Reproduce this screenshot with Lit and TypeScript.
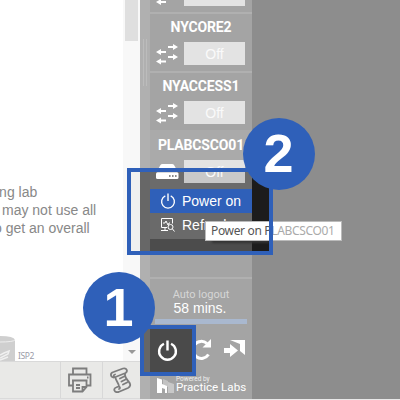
import { LitElement, html, css, svg } from "lit";
import { customElement, property } from "lit/decorators.js";

const arrows = html`<svg class="ico" width="22" height="25" viewBox="0 0 22 25">${svg`
  <g stroke="#fff" stroke-width="2" fill="#fff">
    <path d="M12 6h6M4 11h6M12 16h6M4 20.5h6" fill="none"/>
    <path stroke="none" d="M17 3l5 3-5 3zM17 13l5 3-5 3zM5 8L0 11l5 3zM5 17.5L0 20.5l5 3z"/>
  </g>`}</svg>`;

const server = html`<svg class="ico box" width="23" height="16" viewBox="0 0 23 16">
  <path d="M4.5 1q.5-1 2-1h9.500q1.500 0 2 1l3.500 6H1z" fill="#fff"/><rect x="0" y="8.300" width="22.500" height="6.700" rx="1.500" fill="#fff"/>
  <path d="M13 12h1.600M16 12h1.600M19 12h1.600" stroke="#666" stroke-width="1.5"/></svg>`;

const power = (size: number, w: number) => html`<svg width="${size}" height="${size}" viewBox="0 0 20 20">
  <path d="M6.6 3.600A8 8 0 1 0 13.400 3.600M10 .5v9.500" fill="none" stroke="#fff" stroke-width="${w}"/></svg>`;

@customElement("device-card")
export class DeviceCard extends LitElement {
  @property() name = "";
  @property() kind = "switch";
  static styles = css`
    :host { display: block; box-sizing: border-box; height: 59px; border-top: 2px solid #b0b0b0; }
    .title { height: 28px; line-height: 26px; text-align: center; font-family: Roboto, sans-serif; font-weight: 700; font-size: 14px; letter-spacing: -.15px; color: #fff; white-space: nowrap; }
    .row { display: flex; align-items: flex-start; padding-left: 6px; }
    .ico { flex: none; margin-right: 6px; margin-top: -1px; }
    .box { margin: 4px 5px 0 0; }
    .off { width: 61px; height: 23px; line-height: 24px; background: #e3e3e3; color: #fafafa; text-align: center; font-size: 14px; }
    :host([kind="server"]) { border-top-color: transparent; position: relative; z-index: 2; }
    :host([kind="server"]) .off { background: linear-gradient(#e3e3e3 12px, #c9c9c9 12px); }
  `;
  render() {
    return html`<div class="title">${this.name}</div>
      <div class="row">${this.kind === "switch" ? arrows : server}<div class="off">Off</div></div>`;
  }
}

@customElement("app-root")
export class AppRoot extends LitElement {
  static styles = css`
    :host { display: block; position: relative; width: 400px; height: 400px; overflow: hidden; background: #e8e8e8; font-family: "Liberation Sans", Arial, sans-serif; }
    .page { display: grid; grid-template-columns: 140px 10px 102px 148px; height: 399px; background: #8d8d8d; }
    .doc { display: grid; grid-template-rows: 361px 38px; background: #fff; min-width: 0; overflow: hidden; }
    .view { display: grid; grid-template-columns: 123px 17px; min-width: 0; }
    .text { overflow: hidden; display: flex; flex-direction: column; justify-content: space-between; }
    .copy { padding-top: 183px; font-size: 14px; line-height: 18px; color: #888; white-space: nowrap; }
    .l1 { margin-left: -4px; } .l2 { margin-left: 2px; } .l3 { margin-left: -6px; }
    .net { display: flex; gap: 2px; height: 26px; }
    .isp { font: 8.5px/10px "Noto Sans", sans-serif; letter-spacing: -.4px; color: #9b9ba8; margin-top: 16px; }
    .scroll { background: #f8f8f8; display: flex; flex-direction: column; justify-content: space-between; padding-left: 2px; }
    .thumb { width: 13px; height: 41px; background: #dfdfdf; }
    .down { margin: 0 0 7px 3px; border: 4px solid transparent; border-top-color: #999; border-bottom: 0; width: 0; }
    .tools { background: #e9e9e7; border-top: 1px solid #d9d9d9; border-bottom: 1px solid #dadada; box-sizing: border-box; display: grid; grid-template-columns: 60px 42px 38px; }
    .tool { border-left: 1px solid #d8d8d8; display: flex; align-items: center; padding-left: 7px; }
    .split { background: #b0b0b0; padding: 39px 0 0 2px; }
    .grip { width: 2px; height: 47px; border: solid #bcbcbc; border-width: 0 1px; margin-left: 1px; }
    .side { background: #a4a4a4; display: flex; flex-direction: column; height: 399px; }
    .first { height: 12px; flex: none; padding: 0 0 0 6px; display: flex; gap: 6px; }
    .first svg { width: 22px; height: 6px; }
    .first i { width: 61px; height: 6px; background: #e3e3e3; }
    .sel { background: #aaa; }
    .spacer { height: 88px; }
    .logout { height: 45px; border-top: 2px solid #b0b0b0; padding: 9px 5px 0; text-align: center; font: 11px/13px Roboto, sans-serif; color: #d6d6d6; box-sizing: border-box; }
    .mins { font: 14px/15px "Liberation Sans", sans-serif; color: #fff; margin-left: -2px; }
    .bar { height: 5px; background: #a9b8cf; margin: 3px 0 0; }
    .actions { display: flex; height: 54px; align-items: center; padding-left: 41px; gap: 12px; box-sizing: border-box; }
    .brand { display: flex; gap: 1px; padding-left: 7px; }
    .mark { margin-top: 2px; }
    .by { font: 6.5px/6px Roboto, sans-serif; color: #eee; }
    .labs { font: 11.600px/11px Roboto, sans-serif; color: #fff; white-space: nowrap; }
    .spot { position: absolute; left: 131px; top: 172px; width: 138px; height: 79px; display: grid; grid-template-columns: 9px 10px 102px 17px; z-index: 1; background: #1c1c1c; }
    .s1 { background: #f0f0f0; } .s2 { background: #676767; }
    .menu { background: linear-gradient(#6b6b6b 60px, #4c4c4c 60px); color: #fff; font-size: 14px; padding-top: 17px; }
    .item { height: 24px; display: flex; align-items: center; padding-left: 10px; gap: 6px; }
    .on { background: #2f60b9; }
    .ref { background: #6a6a6a; height: 26px; }
    .item.ref { align-items: flex-start; padding-top: 4px; box-sizing: border-box; }
    .frame { position: absolute; border: 4px solid #2f60b9; box-sizing: border-box; z-index: 4; }
    .f2 { left: 127px; top: 168px; width: 146px; height: 87px; }
    .f1 { left: 140px; top: 325px; width: 56px; height: 51px; background: linear-gradient(90deg, #666 6px, #4a4a4a 6px); display: flex; align-items: center; padding-left: 13px; }
    .num { position: absolute; width: 72px; height: 72px; border-radius: 50%; background: #2f60b9; color: #fff; font-weight: 700; font-size: 54px; line-height: 70px; text-align: center; text-indent: -1px; z-index: 5; }
    .n1 { left: 83px; top: 272px; } .n2 { left: 243px; top: 118px; }
    .tip { position: absolute; left: 205px; top: 221px; width: 137px; height: 20px; box-sizing: border-box; border: 1px solid #bbb; background: #fff; font: 12px/18px "Noto Sans", sans-serif; letter-spacing: -.34px; color: #555; padding-left: 5px; white-space: nowrap; z-index: 3; }
    .tip span { color: #aaa; }
    .shade { position: absolute; left: 212px; top: 239px; width: 57px; height: 4px; background: #333; filter: blur(1px); z-index: 2; }
  `;
  render() {
    return html`
      <div class="page">
        <div class="doc">
          <div class="view">
            <div class="text">
              <div class="copy"><div class="l1">ing lab</div><div class="l2">may not use all</div><div class="l3">o get an overall</div></div>
              <div class="net">
                <svg width="16" height="26" viewBox="0 0 16 26"><path d="M0 1q14 0 15 4v21H0z" fill="#cfcfcf"/><path d="M0 7q13 0 15-2" stroke="#eee" fill="none"/><path d="M0 20l4-2 5-2-1 3-8 4M0 25l8-3" stroke="#f0f0f0" fill="none" stroke-width="1.5"/></svg>
                <span class="isp">ISP2</span>
              </div>
            </div>
            <div class="scroll"><div class="thumb"></div><div class="down"></div></div>
          </div>
          <div class="tools">
            <span></span>
            <div class="tool"><svg width="24" height="26" viewBox="0 0 24 26" fill="none" stroke="#7d7d7d" stroke-width="1.8"><path d="M5 7.500V1.500h13.500v6M5 18.500H1v-11h21.500v11h-4M4 13.500h15.500M5 13.500v11h9.500l4-4.500v-6.500M14.500 24v-4h4M8 18h4M8 21h4M19 10.500h1.500"/></svg></div>
            <div class="tool"><svg width="23" height="26" viewBox="0 0 23 26" fill="none" stroke="#7d7d7d" stroke-width="1.800" stroke-linejoin="round" stroke-linecap="round"><path d="M4 10.500C0 10 0 6 3.500 5L13 1.500c4-1 5 3 2.500 4.500L5.500 10c-2 .5-2.500-2-.5-2.500M15.500 6c-2 3 1 6 3 8.500 3 3 1.500 5.500-.5 6.500l-9.500 4C4 26 3 21.500 6 20.500l2.500-1c1.500 0 2 2 .5 2.500M5.500 10.500c0 3 3 5 3.500 9M10 11.500l4-2M11.500 14.500l4-2M13 17.500l4-2"/></svg></div>
          </div>
        </div>
        <div class="split"><div class="grip"></div></div>
        <div class="side">
          <div class="first"><svg viewBox="0 0 22 6" fill="#fff"><path d="M5-1L0 2l5 3V3h5V1H5z"/></svg><i></i></div>
          <device-card name="NYCORE2"></device-card>
          <device-card name="NYACCESS1"></device-card>
          <div class="sel"><device-card name="PLABCSCO01" kind="server"></device-card></div>
          <div class="spacer"></div>
          <div class="logout">Auto logout<div class="mins">58 mins.</div><div class="bar"></div></div>
          <div class="actions">
            <svg width="21" height="22" viewBox="0 0 21 22"><path d="M16 5.500A8.500 8.500 0 1 0 17.500 16.500" fill="none" stroke="#fff" stroke-width="3"/><path d="M20 1v8.500h-8.500z" fill="#fff"/></svg>
            <svg width="22" height="20" viewBox="0 0 22 20" fill="#fff"><path d="M0 9h6V5l8 6.500L6 18v-4H0zM6 1h15v15l-5-4V5z"/></svg>
          </div>
          <div class="brand"><svg class="mark" width="18" height="16" viewBox="0 0 18 16" fill="#fff"><path d="M0 0l5 1.500v13.500H0z"/><path d="M5 6l5 2v7H8V11L5 10z"/><path d="M6 1l5 2v6L6 7z" opacity=".35"/><path d="M11 4l6 2v9h-6z" opacity=".4"/></svg><div><div class="by">Powered by</div><div class="labs">Practice Labs</div></div></div>
        </div>
        <div></div>
      </div>
      <div class="spot"><div class="s1"></div><div class="s2"></div>
        <div class="menu">
          <div class="item on">${power(16, 1.7)}<span>Power on</span></div>
          <div class="item ref"><svg width="16" height="16" viewBox="0 0 16 16" fill="none" stroke="#fff"><path d="M7 10.500H1.500V1.500h11v5M1 13.500h7M5 10.500v3M3 6h2l1-2 2 4 1-2h1"/><circle cx="10.500" cy="10" r="2.500"/><path d="M12.500 12l2 2.500"/></svg><span>Refresh</span></div>
        </div>
      </div>
      <div class="shade"></div>
      <div class="tip">Power on P<span>LABCSCO01</span></div>
      <div class="frame f2"></div>
      <div class="frame f1">${power(21, 2.3)}</div>
      <div class="num n1">1</div><div class="num n2">2</div>`;
  }
}
